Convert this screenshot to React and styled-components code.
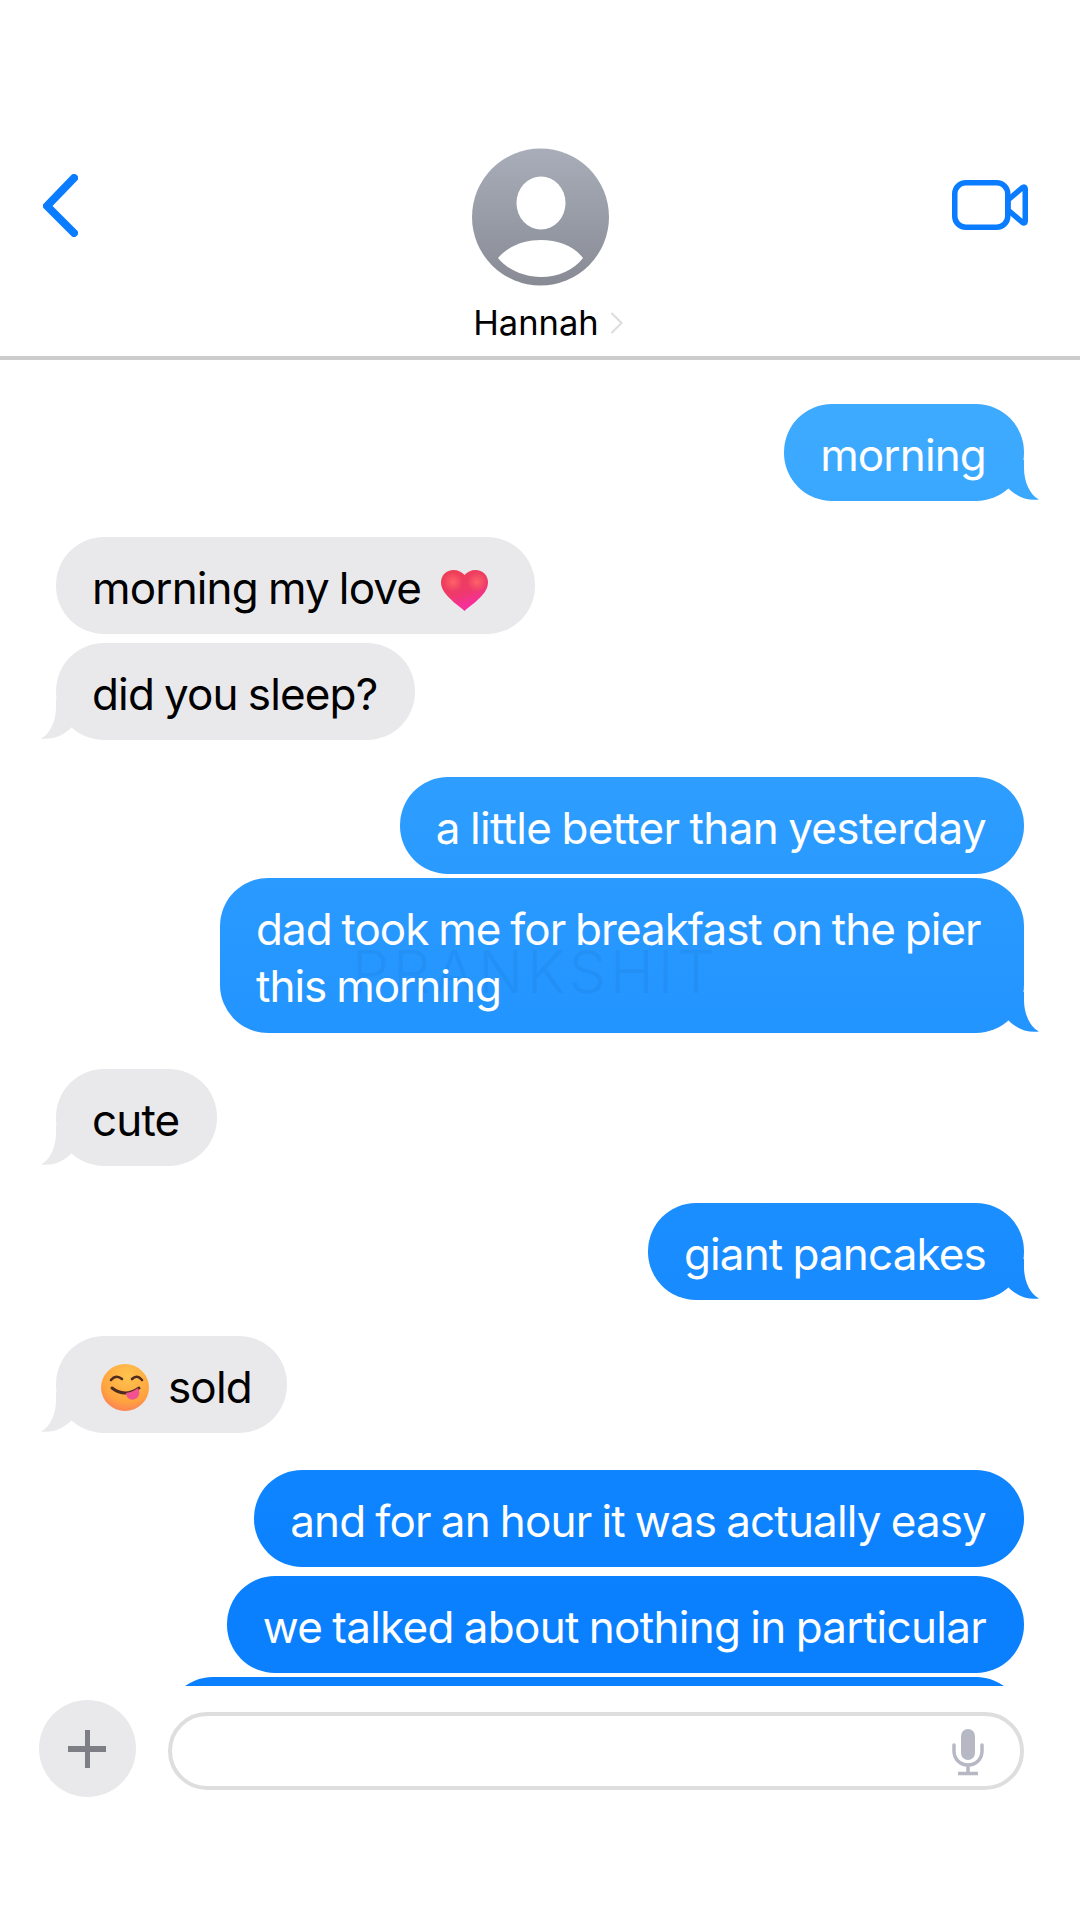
import styled, { createGlobalStyle, css } from "styled-components";

const GlobalStyle = createGlobalStyle`
  html, body {
    margin: 0;
    padding: 0;
    background: #fff;
  }
  * {
    box-sizing: border-box;
  }
`;

const messages = [
  { id: 1, from: "me", gap: 0, lines: ["morning"] },
  { id: 2, from: "them", gap: 36, lines: ["morning my love"], after: "heart", noTail: true },
  { id: 3, from: "them", gap: 9, lines: ["did you sleep?"] },
  { id: 4, from: "me", gap: 37, lines: ["a little better than yesterday"], noTail: true, track: -0.68 },
  { id: 5, from: "me", gap: 4, lines: ["dad took me for breakfast on the pier", "this morning"], mark: true, track: -1 },
  { id: 6, from: "them", gap: 36, lines: ["cute"] },
  { id: 7, from: "me", gap: 37, lines: ["giant pancakes"] },
  { id: 8, from: "them", gap: 36, lines: ["sold"], before: "smile" },
  { id: 9, from: "me", gap: 37, lines: ["and for an hour it was actually easy"], noTail: true },
  { id: 10, from: "me", gap: 9, lines: ["we talked about nothing in particular"], noTail: true, track: -0.72 },
];

function BackIcon() {
  return (
    <svg width="35" height="63" viewBox="0 0 35 63" fill="none">
      <path d="M31 4 L4 32 L31 59" stroke="#0a7cff" strokeWidth="8" strokeLinecap="round" strokeLinejoin="round" />
    </svg>
  );
}

function VideoIcon() {
  return (
    <svg width="76" height="50" viewBox="0 0 76 50" fill="none" stroke="#0a7cff" strokeWidth="5.5">
      <rect x="2.75" y="2.75" width="53" height="44.5" rx="11" />
      <path d="M56 20 L70 8 Q73.25 5.5 73.25 9.5 V40.5 Q73.25 44.5 70 42 L56 30 Z" strokeLinejoin="round" />
    </svg>
  );
}

function AvatarIcon() {
  return (
    <svg width="137" height="138" viewBox="0 0 137 138">
      <defs>
        <linearGradient id="avatarFill" x1="0" y1="0" x2="0" y2="1">
          <stop offset="0" stopColor="#a8adb9" />
          <stop offset="1" stopColor="#888b94" />
        </linearGradient>
      </defs>
      <circle cx="68.5" cy="69" r="68.5" fill="url(#avatarFill)" />
      <ellipse cx="69" cy="55" rx="24.5" ry="26.5" fill="#fff" />
      <path d="M26 110 C36 98 52 92 69 92 C86 92 102 98 111 110 C102 122 86 129 69 129 C52 129 36 122 26 110 Z" fill="#fff" />
    </svg>
  );
}

function SmallChevron() {
  return (
    <svg width="13" height="22" viewBox="0 0 13 22" fill="none">
      <path d="M1.5 1 L11.5 11 L1.5 21" stroke="#dcdcdc" strokeWidth="2" />
    </svg>
  );
}

function HeartEmoji() {
  return (
    <svg width="47" height="41" viewBox="0 0 47 41">
      <defs>
        <linearGradient id="heartBase" x1="0.2" y1="0" x2="0.6" y2="1">
          <stop offset="0" stopColor="#ee3f56" />
          <stop offset="0.55" stopColor="#ee3a6a" />
          <stop offset="1" stopColor="#fa2aae" />
        </linearGradient>
        <radialGradient id="heartLobe" cx="0.5" cy="0.5" r="0.5">
          <stop offset="0" stopColor="#ff6468" stopOpacity="0.95" />
          <stop offset="1" stopColor="#ff6468" stopOpacity="0" />
        </radialGradient>
      </defs>
      <path
        d="M23.5 41 C21 38.5 11 31.5 6 25.5 C2 21 0 17 0 12.5 C0 5 5.5 0 12.5 0 C17 0 21 2 23.5 5 C26 2 30 0 34.5 0 C41.5 0 47 5 47 12.5 C47 17 45 21 41 25.5 C36 31.5 26 38.5 23.5 41 Z"
        fill="url(#heartBase)"
      />
      <ellipse cx="12" cy="12" rx="10" ry="10" fill="url(#heartLobe)" />
      <ellipse cx="36" cy="12" rx="10" ry="10" fill="url(#heartLobe)" />
    </svg>
  );
}

function SmileEmoji() {
  return (
    <svg width="48" height="47" viewBox="0 0 48 47" fill="none">
      <defs>
        <radialGradient id="smileFill" cx="0.55" cy="0.25" r="0.85">
          <stop offset="0" stopColor="#ffc44d" />
          <stop offset="0.65" stopColor="#ffa33f" />
          <stop offset="0.92" stopColor="#fb7f58" />
          <stop offset="1" stopColor="#f56ca0" />
        </radialGradient>
      </defs>
      <ellipse cx="24" cy="23.5" rx="24" ry="23.5" fill="url(#smileFill)" />
      <path d="M10 16 Q15 10 21 15" stroke="#4f2c22" strokeWidth="2.6" strokeLinecap="round" />
      <path d="M31 15 Q36 10 41 16" stroke="#4f2c22" strokeWidth="2.6" strokeLinecap="round" />
      <path d="M11 24 Q24 34 38 24" stroke="#4f2c22" strokeWidth="3" strokeLinecap="round" />
      <path d="M25 29 Q32 28 37 24 Q40 30 36 34 Q30 38 26 33 Z" fill="#f2528f" />
    </svg>
  );
}

function MicIcon() {
  return (
    <svg width="36" height="50" viewBox="0 0 36 50" fill="none">
      <rect x="11" y="3" width="14" height="31" rx="7" fill="#b6b9c3" />
      <path d="M4 19 V25 C4 33 10 39 18 39 C26 39 32 33 32 25 V19" stroke="#b6b9c3" strokeWidth="3.5" strokeLinecap="round" />
      <path d="M18 39 V47 M8 47.5 H28" stroke="#b6b9c3" strokeWidth="3.5" />
    </svg>
  );
}

export default function App() {
  return (
    <Page>
      <GlobalStyle />
      <Header>
        <BackButton>
          <BackIcon />
        </BackButton>
        <Contact>
          <AvatarIcon />
          <NameRow>
            <Name>Hannah</Name>
            <SmallChevron />
          </NameRow>
        </Contact>
        <VideoButton>
          <VideoIcon />
        </VideoButton>
      </Header>

      <MessageList>
        {messages.map((m) => (
          <Bubble
            key={m.id}
            $from={m.from}
            $gap={m.gap}
            $noTail={m.noTail}
            $wide={m.mark}
            $track={m.track}
            $endPad={m.before ? 35 : 38}
          >
            {m.mark && <Watermark>PRANKSHIT</Watermark>}
            {m.before === "smile" && (
              <LeadingEmoji>
                <SmileEmoji />
              </LeadingEmoji>
            )}
            <div>
              {m.lines.map((line) => (
                <Line key={line}>{line}</Line>
              ))}
            </div>
            {m.after === "heart" && (
              <TrailingEmoji>
                <HeartEmoji />
              </TrailingEmoji>
            )}
          </Bubble>
        ))}
        <CutOffBubble $from="me" $gap={4} $noTail $endPad={38} />
      </MessageList>

      <Composer>
        <PlusButton>
          <PlusMark />
        </PlusButton>
        <InputField>
          <MicIcon />
        </InputField>
      </Composer>
    </Page>
  );
}

const Page = styled.div`
  width: 1080px;
  height: 1920px;
  display: flex;
  flex-direction: column;
  background: #fff;
  font-family: Inter, "Liberation Sans", sans-serif;
  overflow: hidden;
`;

const Header = styled.header`
  height: 360px;
  flex-shrink: 0;
  display: grid;
  grid-template-columns: 1fr auto 1fr;
  padding-top: 148px;
  border-bottom: 4px solid #cccccc;
`;

const BackButton = styled.div`
  justify-self: start;
  margin: 26px 0 0 43px;
`;

const VideoButton = styled.div`
  justify-self: end;
  margin: 32px 52px 0 0;
`;

const Contact = styled.div`
  display: flex;
  flex-direction: column;
  align-items: center;
`;

const NameRow = styled.div`
  display: flex;
  align-items: center;
  gap: 11px;
  margin: 17px 0 0 16px;
`;

const Name = styled.span`
  font-size: 34.5px;
  line-height: 40px;
  color: #000;
`;

const MessageList = styled.main`
  height: 1326px;
  flex-shrink: 0;
  display: flex;
  flex-direction: column;
  padding: 44px 56px 0;
  overflow: hidden;
`;

const tailRight = "path('M0 0 H25 V8 C25 22 31 35 40 39.5 C27 41 17 36 9 28 Z')";
const tailLeft = "path('M40 0 H15 V8 C15 22 9 35 0 39.5 C13 41 23 36 31 28 Z')";

const Bubble = styled.div`
  position: relative;
  flex-shrink: 0;
  display: flex;
  align-items: center;
  align-self: ${(p) => (p.$from === "me" ? "flex-end" : "flex-start")};
  margin-top: ${(p) => p.$gap}px;
  min-height: 97px;
  width: ${(p) => (p.$wide ? "804px" : "auto")};
  padding: 23px ${(p) => p.$endPad}px ${(p) => (p.$wide ? "18px" : "17px")} 36px;
  border-radius: 48px;
  font-size: 44px;
  line-height: 57px;
  letter-spacing: ${(p) => p.$track ?? -0.85}px;
  word-spacing: -1.5px;
  ${(p) =>
    p.$from === "me"
      ? css`
          color: #fff;
          background: linear-gradient(180deg, #3eabff 400px, #0a80ff 1600px) fixed;
        `
      : css`
          color: #000;
          background: #e9e9eb;
        `}
  ${(p) =>
    !p.$noTail &&
    css`
      &::after {
        content: "";
        position: absolute;
        bottom: 0;
        width: 40px;
        height: 41px;
        background: inherit;
        ${p.$from === "me"
          ? css`
              right: -15px;
              clip-path: ${tailRight};
            `
          : css`
              left: -15px;
              clip-path: ${tailLeft};
            `}
      }
    `}
`;

const CutOffBubble = styled(Bubble)`
  width: 859px;
`;

const Line = styled.span`
  position: relative;
  display: block;
  white-space: nowrap;
`;

const Watermark = styled.span`
  position: absolute;
  left: 132px;
  top: 64px;
  font-size: 59px;
  font-weight: 300;
  line-height: 59px;
  letter-spacing: 4px;
  word-spacing: 0;
  color: rgba(0, 60, 130, 0.07);
`;

const LeadingEmoji = styled.span`
  display: flex;
  margin: 0 19px 0 9px;
`;

const TrailingEmoji = styled.span`
  display: flex;
  margin: 4px 9px 0 20px;
`;

const Composer = styled.footer`
  display: flex;
  align-items: flex-start;
  gap: 32px;
  padding: 14px 56px 0 39px;
`;

const PlusButton = styled.div`
  position: relative;
  width: 97px;
  height: 97px;
  flex-shrink: 0;
  border-radius: 50%;
  background: #e9e9eb;
`;

const PlusMark = styled.span`
  position: absolute;
  left: 29px;
  top: 30px;
  width: 38px;
  height: 38px;
  border-radius: 3px;
  background:
    linear-gradient(#7d7f84, #7d7f84) center / 38px 6px no-repeat,
    linear-gradient(#7d7f84, #7d7f84) center / 5px 38px no-repeat;
`;

const InputField = styled.div`
  flex: 1;
  height: 78px;
  margin-top: 12px;
  display: flex;
  align-items: center;
  justify-content: flex-end;
  padding: 0 34px 0 0;
  border: 4px solid #dedede;
  border-radius: 39px;
`;
